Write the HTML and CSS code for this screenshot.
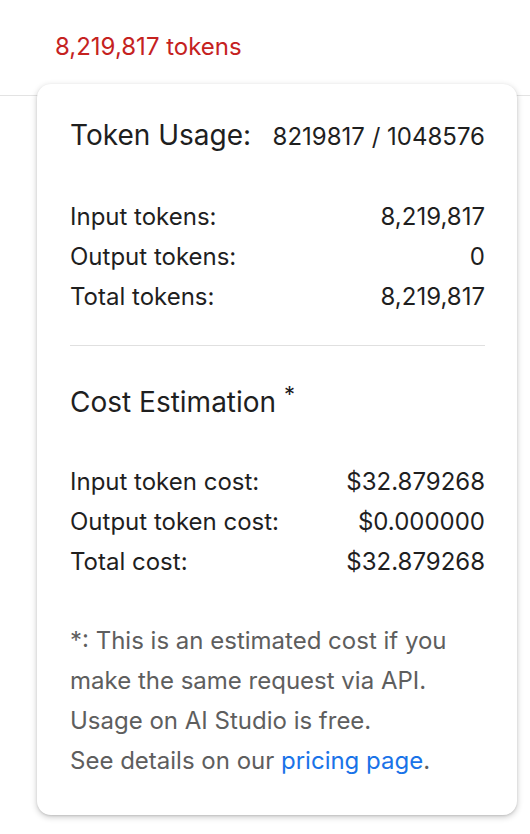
FILE: index.html
```html
<!DOCTYPE html>
<html lang="en">
<head>
    <meta charset="UTF-8">
    <meta name="viewport" content="width=device-width, initial-scale=1.0">
    <title>Token usage</title>
    <link rel="stylesheet" href="styles.css">
</head>
<body>
    <div class="topbar">
        <span class="token-count">8,219,817 tokens</span>
    </div>

    <div class="tooltip">
        <div class="usage-head">
            <span class="head-title">Token Usage:</span>
            <span class="head-value">8219817 / 1048576</span>
        </div>

        <div class="rows first-rows">
            <div class="row"><span>Input tokens:</span><span>8,219,817</span></div>
            <div class="row"><span>Output tokens:</span><span>0</span></div>
            <div class="row"><span>Total tokens:</span><span>8,219,817</span></div>
        </div>

        <hr class="divider">

        <div class="cost-head">Cost Estimation <sup>*</sup></div>

        <div class="rows">
            <div class="row"><span>Input token cost:</span><span>$32.879268</span></div>
            <div class="row"><span>Output token cost:</span><span>$0.000000</span></div>
            <div class="row"><span>Total cost:</span><span>$32.879268</span></div>
        </div>

        <p class="note">
            *: This is an estimated cost if you<br>
            make the same request via API.<br>
            Usage on AI Studio is free.<br>
            See details on our <a href="#">pricing page</a>.
        </p>
    </div>
</body>
</html>
```

FILE: styles.css
```css
body {
    font-family: Inter, "Noto Sans", sans-serif;
    margin: 0;
    padding: 0;
    background-color: #fff;
    color: #1f1f1f;
}
.topbar {
    height: 96px;
    border-bottom: 1px solid #e3e3e3;
    padding-left: 55px;
    box-sizing: border-box;
}
.token-count {
    display: inline-block;
    margin-top: 33px;
    font-size: 24px;
    line-height: 28px;
    color: #c5221f;
}
.tooltip {
    position: absolute;
    left: 37px;
    top: 84px;
    width: 480px;
    box-sizing: border-box;
    padding: 31px 32px 34px 33px;
    background-color: #fff;
    border-radius: 14px;
    box-shadow: 0 2px 6px rgba(0, 0, 0, 0.22), 0 1px 2px rgba(0, 0, 0, 0.1);
}
.usage-head {
    display: flex;
    justify-content: space-between;
    align-items: baseline;
    line-height: 40px;
}
.head-title {
    font-size: 28px;
}
.head-value {
    font-size: 24px;
}
.rows {
    margin-top: 40px;
}
.row {
    display: flex;
    justify-content: space-between;
    font-size: 24px;
    line-height: 40px;
}
.divider {
    border: none;
    border-top: 1px solid #e0e0e0;
    margin: 28px 0 0 0;
}
.cost-head {
    margin-top: 36px;
    font-size: 28px;
    line-height: 40px;
}
.cost-head sup {
    font-size: 22px;
    vertical-align: 10px;
    line-height: 0;
}
.note {
    margin: 39px 0 0 0;
    font-size: 24px;
    line-height: 40px;
    color: #5e5e5e;
}
.note a {
    color: #1a73e8;
    text-decoration: none;
}
```
